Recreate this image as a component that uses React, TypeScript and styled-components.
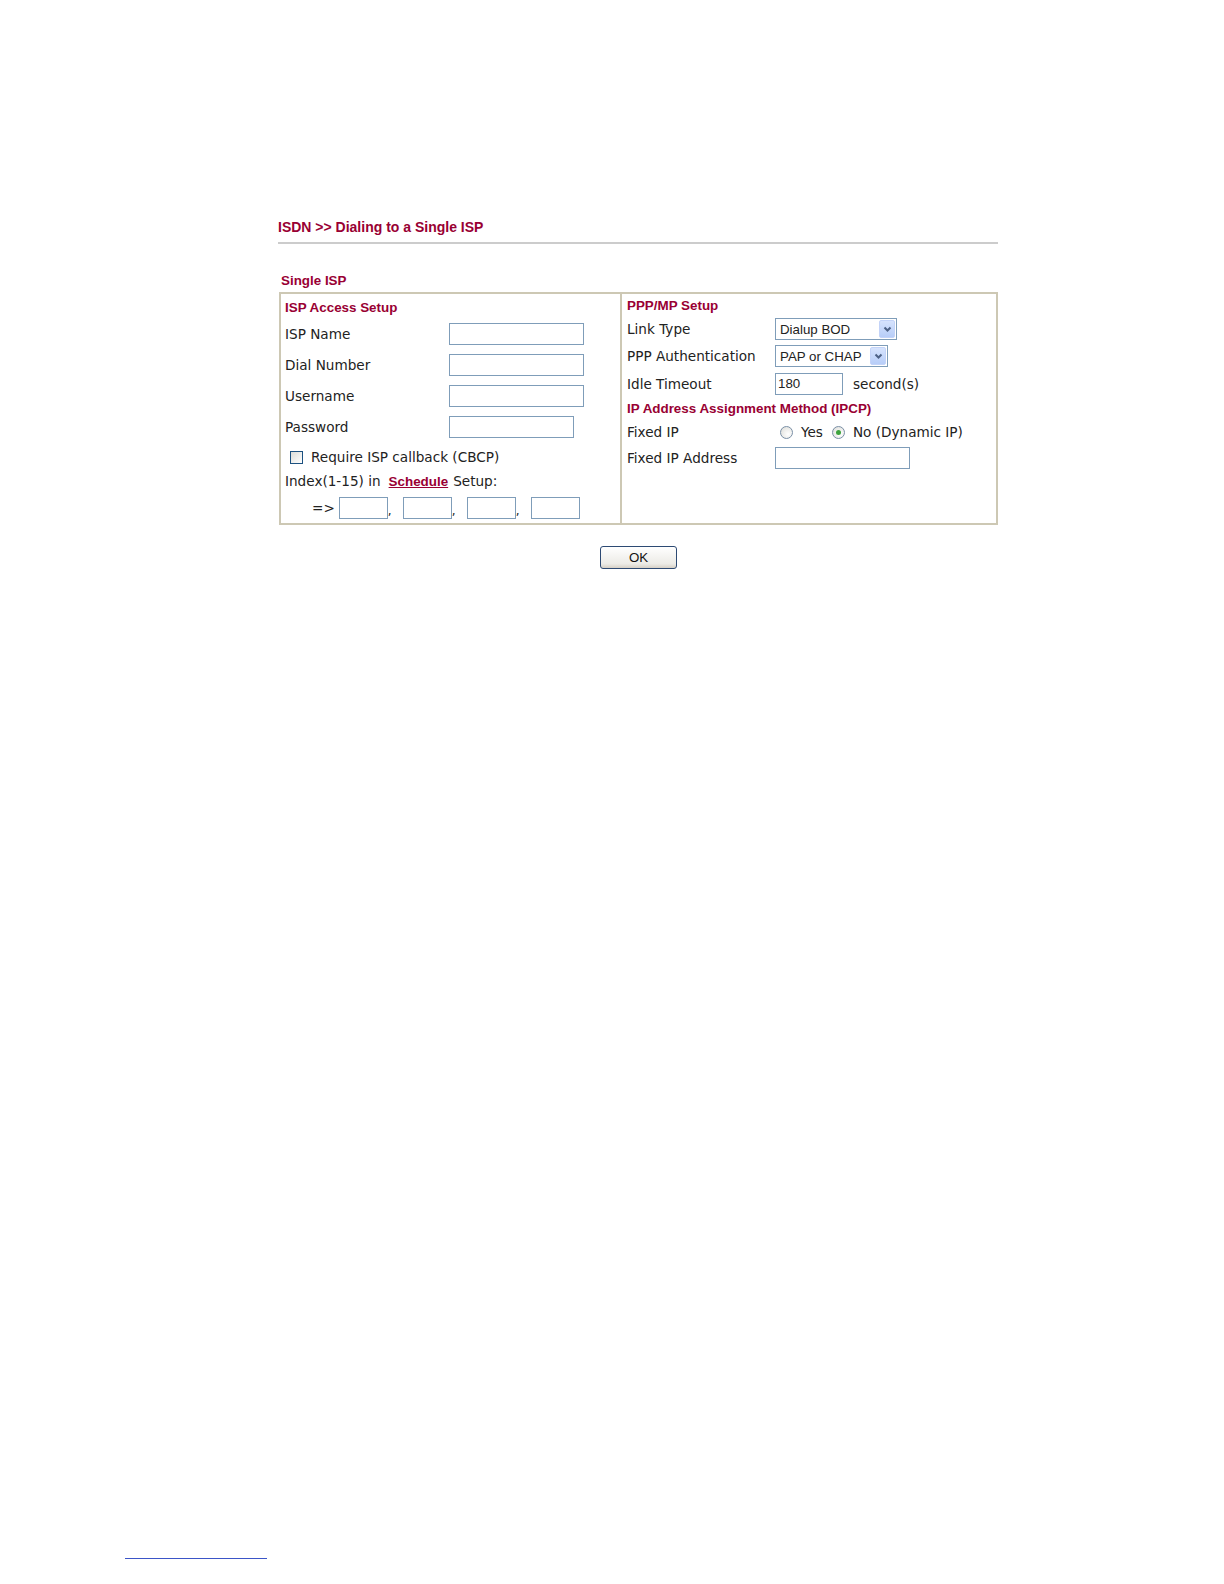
import React from 'react';
import styled, { createGlobalStyle } from 'styled-components';

const GlobalStyle = createGlobalStyle`
  html, body {
    margin: 0;
    padding: 0;
    background: #ffffff;
    overflow: hidden;
  }
  body {
    font-family: 'DejaVu Sans', Verdana, sans-serif;
    color: #222;
  }
`;

const crimson = '#990033';
const fieldBorder = '#7f9db9';
const tableBorder = '#cdc8b4';

const Page = styled.div`
  width: 100%;
  height: 100vh;
  display: flex;
  flex-direction: column;
`;

const Content = styled.div`
  margin: 218px 0 0 278px;
  width: 720px;
  display: flex;
  flex-direction: column;
`;

const PageTitle = styled.div`
  font-family: 'Liberation Sans', Arial, sans-serif;
  font-weight: bold;
  font-size: 14px;
  line-height: 18px;
  color: ${crimson};
  padding-bottom: 6px;
  border-bottom: 2px solid #cccccc;
`;

const TableCaption = styled.div`
  font-family: 'Liberation Sans', Arial, sans-serif;
  font-weight: bold;
  font-size: 13.4px;
  line-height: 18px;
  color: ${crimson};
  margin: 28px 0 2px 3px;
`;

const Box = styled.div`
  margin-left: 1px;
  display: grid;
  grid-template-columns: 339px 380px;
  border: 2px solid ${tableBorder};
  box-sizing: border-box;
`;

const Cell = styled.div<{ $right?: boolean }>`
  display: flex;
  flex-direction: column;
  padding: ${p => (p.$right ? '1px 0 0 5px' : '3px 0 4px 4px')};
  border-left: ${p => (p.$right ? `2px solid ${tableBorder}` : 'none')};
`;

const Heading = styled.div<{ $h: number }>`
  font-family: 'Liberation Sans', Arial, sans-serif;
  font-weight: bold;
  font-size: 13.4px;
  height: ${p => p.$h}px;
  display: flex;
  align-items: center;
  color: ${crimson};
`;

const Row = styled.div<{ $h: number; $label?: number }>`
  height: ${p => p.$h}px;
  display: grid;
  grid-template-columns: ${p => p.$label ?? 164}px auto;
  align-items: center;
`;

const Label = styled.span`
  font-size: 13.6px;
  white-space: nowrap;
`;

const TextField = styled.div<{ $w: number }>`
  width: ${p => p.$w}px;
  height: 22px;
  box-sizing: border-box;
  border: 1px solid ${fieldBorder};
  background: #fff;
  font-family: 'Liberation Sans', Arial, sans-serif;
  font-size: 13.3px;
  line-height: 20px;
  padding-left: 2px;
`;

const Combo = styled.div<{ $w: number }>`
  width: ${p => p.$w}px;
  height: 22px;
  box-sizing: border-box;
  border: 1px solid ${fieldBorder};
  background: #fff;
  display: flex;
  align-items: center;
  justify-content: space-between;
  padding: 0 1px 0 4px;
  font-family: 'Liberation Sans', Arial, sans-serif;
  font-size: 13.3px;
`;

const ComboArrow = styled.span`
  width: 16px;
  height: 18px;
  border-radius: 2px;
  background: linear-gradient(#d6e3fd, #b7cdf8);
  border: 1px solid #c3d3f8;
  box-sizing: border-box;
  display: flex;
  align-items: center;
  justify-content: center;
`;

const CheckRow = styled.div`
  height: 30px;
  display: flex;
  align-items: center;
  padding-left: 5px;
  gap: 8px;
`;

const CheckBox = styled.span`
  width: 13px;
  height: 13px;
  box-sizing: border-box;
  border: 1px solid #1c5180;
  background: linear-gradient(135deg, #dcdcd7, #ffffff);
`;

const IndexRow = styled.div`
  height: 18px;
  display: flex;
  align-items: center;
  font-size: 13.6px;
  white-space: pre;
`;

const ScheduleLink = styled.a`
  font-family: 'Liberation Sans', Arial, sans-serif;
  font-weight: bold;
  font-size: 13.4px;
  color: ${crimson};
  text-decoration: underline;
  margin: 0 5px 0 8px;
`;

const SlotRow = styled.div`
  margin-top: 7px;
  height: 22px;
  display: flex;
  align-items: center;
  padding-left: 27px;
  font-size: 13.6px;
`;

const Arrow = styled.span`
  margin-right: 4px;
`;

const Slot = styled.div`
  width: 49px;
  height: 22px;
  box-sizing: border-box;
  border: 1px solid ${fieldBorder};
  background: #fff;
`;

const Comma = styled.span`
  width: 15px;
  align-self: flex-end;
  font-size: 12px;
  line-height: 16px;
`;

const Unit = styled.span`
  font-size: 13.6px;
  margin-left: 10px;
`;

const InlineField = styled.div`
  display: flex;
  align-items: center;
`;

const RadioGroup = styled.div`
  display: flex;
  align-items: center;
  padding-left: 5px;
  font-size: 13.6px;
`;

const Radio = styled.span<{ $on?: boolean }>`
  width: 13px;
  height: 13px;
  border-radius: 50%;
  box-sizing: border-box;
  border: 1px solid #7a8fa6;
  background: radial-gradient(circle at 65% 65%, #ffffff, #dcdcd7);
  display: flex;
  align-items: center;
  justify-content: center;
  margin-right: 8px;

  &::after {
    content: '';
    width: 5px;
    height: 5px;
    border-radius: 50%;
    background: ${p => (p.$on ? '#3da33d' : 'transparent')};
  }
`;

const RadioText = styled.span`
  margin-right: 9px;
`;

const Actions = styled.div`
  display: flex;
  justify-content: center;
  margin-top: 21px;
  padding-left: 1px;
`;

const Button = styled.button`
  width: 77px;
  height: 23px;
  border: 1px solid #2d4a73;
  border-radius: 3px;
  background: linear-gradient(#ffffff, #ecebe6 80%, #d6d0c5);
  font-family: 'Liberation Sans', Arial, sans-serif;
  font-size: 13.3px;
  color: #111;
  padding: 0;
`;

const FootRule = styled.div`
  margin: auto 0 25px 125px;
  width: 142px;
  height: 1px;
  background: #3b55c8;
`;

function Chevron() {
  return (
    <svg width="9" height="7" viewBox="0 0 9 7">
      <path d="M1.5 1.5 L4.5 4.5 L7.5 1.5" fill="none" stroke="#4d6185" strokeWidth="2" />
    </svg>
  );
}

function Select({ value, width }: { value: string; width: number }) {
  return (
    <Combo $w={width}>
      <span>{value}</span>
      <ComboArrow>
        <Chevron />
      </ComboArrow>
    </Combo>
  );
}

const slots = [0, 1, 2, 3];

export default function App() {
  return (
    <Page>
      <GlobalStyle />
      <Content>
        <PageTitle>ISDN &gt;&gt; Dialing to a Single ISP</PageTitle>
        <TableCaption>Single ISP</TableCaption>
        <Box>
          <Cell>
            <Heading $h={21}>ISP Access Setup</Heading>
            <Row $h={31}>
              <Label>ISP Name</Label>
              <TextField $w={135} />
            </Row>
            <Row $h={31}>
              <Label>Dial Number</Label>
              <TextField $w={135} />
            </Row>
            <Row $h={31}>
              <Label>Username</Label>
              <TextField $w={135} />
            </Row>
            <Row $h={31}>
              <Label>Password</Label>
              <TextField $w={125} />
            </Row>
            <CheckRow>
              <CheckBox />
              <Label>Require ISP callback (CBCP)</Label>
            </CheckRow>
            <IndexRow>
              Index(1-15) in
              <ScheduleLink>Schedule</ScheduleLink>
              Setup:
            </IndexRow>
            <SlotRow>
              <Arrow>=&gt;</Arrow>
              {slots.map(i => (
                <React.Fragment key={i}>
                  <Slot />
                  {i < slots.length - 1 && <Comma>,</Comma>}
                </React.Fragment>
              ))}
            </SlotRow>
          </Cell>
          <Cell $right>
            <Heading $h={20}>PPP/MP Setup</Heading>
            <Row $h={28} $label={148}>
              <Label>Link Type</Label>
              <Select value="Dialup BOD" width={122} />
            </Row>
            <Row $h={26} $label={148}>
              <Label>PPP Authentication</Label>
              <Select value="PAP or CHAP" width={113} />
            </Row>
            <Row $h={29} $label={148}>
              <Label>Idle Timeout</Label>
              <InlineField>
                <TextField $w={68}>180</TextField>
                <Unit>second(s)</Unit>
              </InlineField>
            </Row>
            <Heading $h={20}>IP Address Assignment Method (IPCP)</Heading>
            <Row $h={28} $label={148}>
              <Label>Fixed IP</Label>
              <RadioGroup>
                <Radio />
                <RadioText>Yes</RadioText>
                <Radio $on />
                <span>No (Dynamic IP)</span>
              </RadioGroup>
            </Row>
            <Row $h={24} $label={148}>
              <Label>Fixed IP Address</Label>
              <TextField $w={135} />
            </Row>
          </Cell>
        </Box>
        <Actions>
          <Button>OK</Button>
        </Actions>
      </Content>
      <FootRule />
    </Page>
  );
}
